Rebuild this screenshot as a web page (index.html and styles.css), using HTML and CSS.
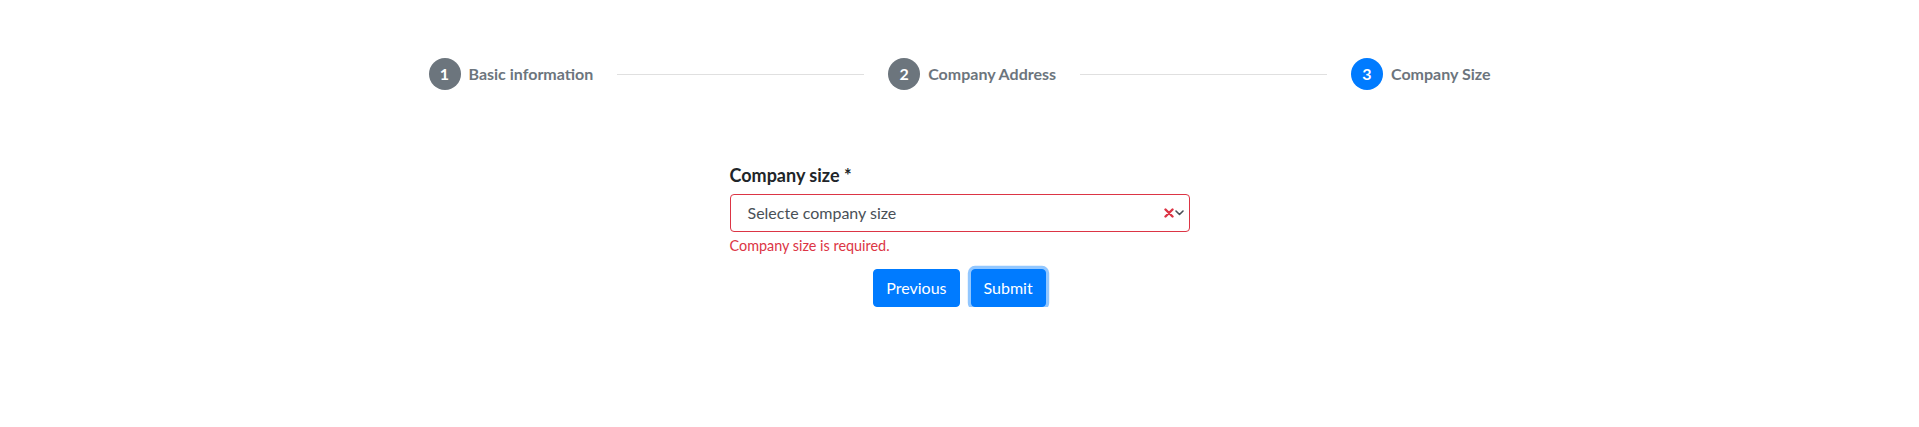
FILE: index.html
```html
<!DOCTYPE html>
<html lang="en">
<head>
<meta charset="utf-8">
<title>Company Size</title>
<link rel="stylesheet" href="styles.css">
</head>
<body>
<div class="container">
  <div class="stepper">
    <div class="step">
      <span class="circle">1</span>
      <span class="step-label">Basic information</span>
    </div>
    <div class="line"></div>
    <div class="step">
      <span class="circle">2</span>
      <span class="step-label">Company Address</span>
    </div>
    <div class="line"></div>
    <div class="step active">
      <span class="circle">3</span>
      <span class="step-label">Company Size</span>
    </div>
  </div>

  <form class="form">
    <div class="field">
      <label class="field-label">Company size *</label>
      <div class="select is-invalid">
        <span class="select-value">Selecte company size</span>
        <span class="select-icons">
          <svg class="icon-clear" width="10" height="10" viewBox="0 0 10 10"><path d="M1.5 1.5L8.5 8.5M8.5 1.5L1.5 8.5" stroke="#dc3545" stroke-width="2.4" stroke-linecap="round"/></svg>
          <svg class="icon-chevron" width="9" height="6" viewBox="0 0 9 6"><path d="M1 1L4.5 4.5L8 1" stroke="#495057" stroke-width="1.6" fill="none" stroke-linecap="round" stroke-linejoin="round"/></svg>
        </span>
      </div>
      <div class="invalid-feedback">Company size is required.</div>
    </div>
    <div class="actions">
      <button type="button" class="btn">Previous</button>
      <button type="button" class="btn focused">Submit</button>
    </div>
  </form>
</div>
</body>
</html>
```

FILE: styles.css
```css
* { box-sizing: border-box; }

body {
  margin: 0;
  background: #fff;
  font-family: Lato, "Open Sans", "Liberation Sans", sans-serif;
  font-size: 16px;
  line-height: 1.5;
  color: #212529;
}

.container {
  width: 1140px;
  padding: 34px 15px 0;
  margin: 0 auto;
}

.stepper {
  display: flex;
  align-items: center;
}

.step {
  display: flex;
  align-items: center;
  padding: 20px;
  font-weight: 700;
  color: #6c757d;
  white-space: nowrap;
}

.circle {
  display: inline-flex;
  justify-content: center;
  width: 32px;
  height: 32px;
  padding: 8px 0;
  margin: 4px;
  line-height: 16px;
  color: #fff;
  background: #6c757d;
  border-radius: 16px;
}

.step.active .circle { background: #007bff; }

.step-label {
  display: inline-block;
  margin: 4px;
}

.line {
  flex: 1 0 32px;
  min-height: 1px;
  background: rgba(0, 0, 0, .12);
}

.form {
  display: flex;
  flex-direction: column;
  align-items: center;
  margin-top: 50px;
}

.field { width: 460px; }

.field-label {
  display: block;
  font-size: 18px;
  font-weight: 700;
  line-height: 22px;
  margin-bottom: 8px;
}

.select {
  display: flex;
  align-items: center;
  height: 38px;
  padding: 0 5px 0 17px;
  border: 1px solid #ced4da;
  border-radius: 4px;
  color: #495057;
}

.select.is-invalid { border-color: #dc3545; }

.select-value { flex: 1; }

.select-icons {
  display: flex;
  align-items: center;
  gap: 1px;
}

.invalid-feedback {
  margin-top: 3px;
  font-size: 14.4px;
  line-height: 21.6px;
  color: #dc3545;
}

.actions {
  display: flex;
  gap: 11px;
  margin-top: 12px;
}

.btn {
  font-family: inherit;
  font-size: 16px;
  line-height: 1.5;
  padding: 6px 12px;
  color: #fff;
  background: #007bff;
  border: 1px solid #007bff;
  border-radius: 4px;
}

.btn.focused { box-shadow: 0 0 0 3.2px rgba(38, 143, 255, .5); }
```
